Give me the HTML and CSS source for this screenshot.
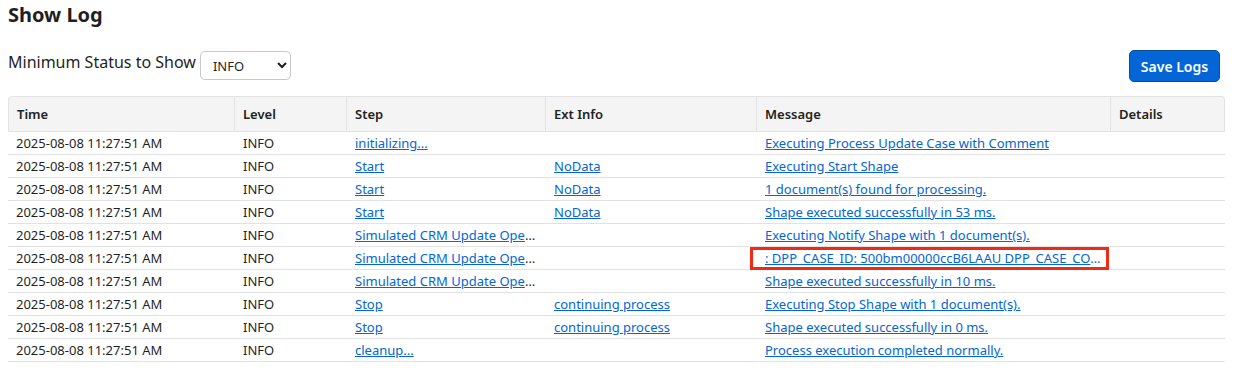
FILE: index.html
```html
<!DOCTYPE html>
<html>
<head>
<meta charset="utf-8">
<link rel="stylesheet" href="styles.css">
</head>
<body>
<div class="page">
  <h1 class="title">Show Log</h1>
  <div class="controls">
    <label class="status-label"><span class="label-text">Minimum Status to Show</span>
      <select class="status-select"><option>INFO</option></select>
    </label>
    <button class="save-btn">Save Logs</button>
  </div>
  <table class="log-table">
    <colgroup>
      <col class="c-time"><col class="c-level"><col class="c-step"><col class="c-ext"><col class="c-msg"><col class="c-det">
    </colgroup>
    <thead>
      <tr><th>Time</th><th>Level</th><th>Step</th><th>Ext Info</th><th>Message</th><th>Details</th></tr>
    </thead>
    <tbody>
      <tr><td>2025-08-08 11:27:51 AM</td><td>INFO</td><td><a href="#">initializing...</a></td><td></td><td><a href="#">Executing Process Update Case with Comment</a></td><td></td></tr>
      <tr><td>2025-08-08 11:27:51 AM</td><td>INFO</td><td><a href="#">Start</a></td><td><a href="#">NoData</a></td><td><a href="#">Executing Start Shape</a></td><td></td></tr>
      <tr><td>2025-08-08 11:27:51 AM</td><td>INFO</td><td><a href="#">Start</a></td><td><a href="#">NoData</a></td><td><a href="#">1 document(s) found for processing.</a></td><td></td></tr>
      <tr><td>2025-08-08 11:27:51 AM</td><td>INFO</td><td><a href="#">Start</a></td><td><a href="#">NoData</a></td><td><a href="#">Shape executed successfully in 53 ms.</a></td><td></td></tr>
      <tr><td>2025-08-08 11:27:51 AM</td><td>INFO</td><td><a href="#" class="trunc">Simulated CRM Update Operation</a></td><td></td><td><a href="#">Executing Notify Shape with 1 document(s).</a></td><td></td></tr>
      <tr><td>2025-08-08 11:27:51 AM</td><td>INFO</td><td><a href="#" class="trunc">Simulated CRM Update Operation</a></td><td></td><td class="marked"><a href="#" class="trunc msg-trunc">: DPP_CASE_ID: 500bm00000ccB6LAAU DPP_CASE_COMMENT: Updated</a><span class="highlight"></span></td><td></td></tr>
      <tr><td>2025-08-08 11:27:51 AM</td><td>INFO</td><td><a href="#" class="trunc">Simulated CRM Update Operation</a></td><td></td><td><a href="#">Shape executed successfully in 10 ms.</a></td><td></td></tr>
      <tr><td>2025-08-08 11:27:51 AM</td><td>INFO</td><td><a href="#">Stop</a></td><td><a href="#">continuing process</a></td><td><a href="#">Executing Stop Shape with 1 document(s).</a></td><td></td></tr>
      <tr><td>2025-08-08 11:27:51 AM</td><td>INFO</td><td><a href="#">Stop</a></td><td><a href="#">continuing process</a></td><td><a href="#">Shape executed successfully in 0 ms.</a></td><td></td></tr>
      <tr><td>2025-08-08 11:27:51 AM</td><td>INFO</td><td><a href="#">cleanup...</a></td><td></td><td><a href="#">Process execution completed normally.</a></td><td></td></tr>
    </tbody>
  </table>
</div>
</body>
</html>
```
FILE: styles.css
```css
* { box-sizing: border-box; }
html, body { margin: 0; padding: 0; background: #fff; }
body {
  font-family: "Noto Sans", "Open Sans", sans-serif;
  color: #1f1f1f;
}
.page { padding: 0 13px 0 8px; }
.title {
  margin: 0;
  padding-top: 1px;
  font-size: 20px;
  font-weight: 700;
  line-height: 28px;
  color: #1f1f1f;
}
.controls {
  margin-top: 22px;
  display: flex;
  justify-content: space-between;
  align-items: flex-start;
  padding-right: 5px;
}
.status-label {
  font-size: 16px;
  display: flex;
  align-items: flex-start;
  gap: 4px;
}
.label-text { line-height: 22px; }
.status-select {
  width: 91px;
  height: 29px;
  font-family: "Noto Sans", sans-serif;
  font-size: 13px;
  border: 1px solid #c8c8c8;
  border-radius: 5px;
  background: #fff;
  padding: 0 6px 0 8px;
  color: #1f1f1f;
}
.save-btn {
  width: 91px;
  height: 32px;
  margin-top: -1px;
  background: #0466d6;
  color: #fff;
  border: 1px solid #0a4d9a;
  border-radius: 5px;
  font-family: "Noto Sans", sans-serif;
  font-size: 14px;
  font-weight: 600;
}
.log-table {
  margin-top: 14px;
  width: 1217px;
  border-collapse: separate;
  border-spacing: 0;
  font-size: 13px;
  table-layout: fixed;
}
.c-time { width: 227px; }
.c-level { width: 112px; }
.c-step { width: 199px; }
.c-ext { width: 211px; }
.c-msg { width: 354px; }
.c-det { width: 114px; }
.log-table th {
  background: #f4f4f4;
  text-align: left;
  font-weight: 600;
  height: 36px;
  padding: 0 8px;
  border-top: 1px solid #e2e2e2;
  border-bottom: 1px solid #e2e2e2;
  border-right: 1px solid #e2e2e2;
  color: #222;
}
.log-table th:first-child { border-left: 1px solid #e2e2e2; border-top-left-radius: 4px; }
.log-table th:last-child { border-top-right-radius: 4px; }
.log-table td {
  height: 23px;
  padding: 0 8px;
  border-bottom: 1px solid #e2e2e2;
  white-space: nowrap;
  overflow: hidden;
  text-overflow: ellipsis;
  color: #1f1f1f;
}
.log-table a {
  color: #0466d6;
  text-decoration: underline;
}
.log-table td.marked {
  position: relative;
  overflow: visible;
}
.msg-trunc {
  display: block;
  overflow: hidden;
  white-space: nowrap;
  text-overflow: ellipsis;
  width: 338px;
}
.highlight {
  position: absolute;
  left: -7px;
  right: 2px;
  top: 0px;
  bottom: -1px;
  border: 3px solid #ef2a16;
  pointer-events: none;
}
```
